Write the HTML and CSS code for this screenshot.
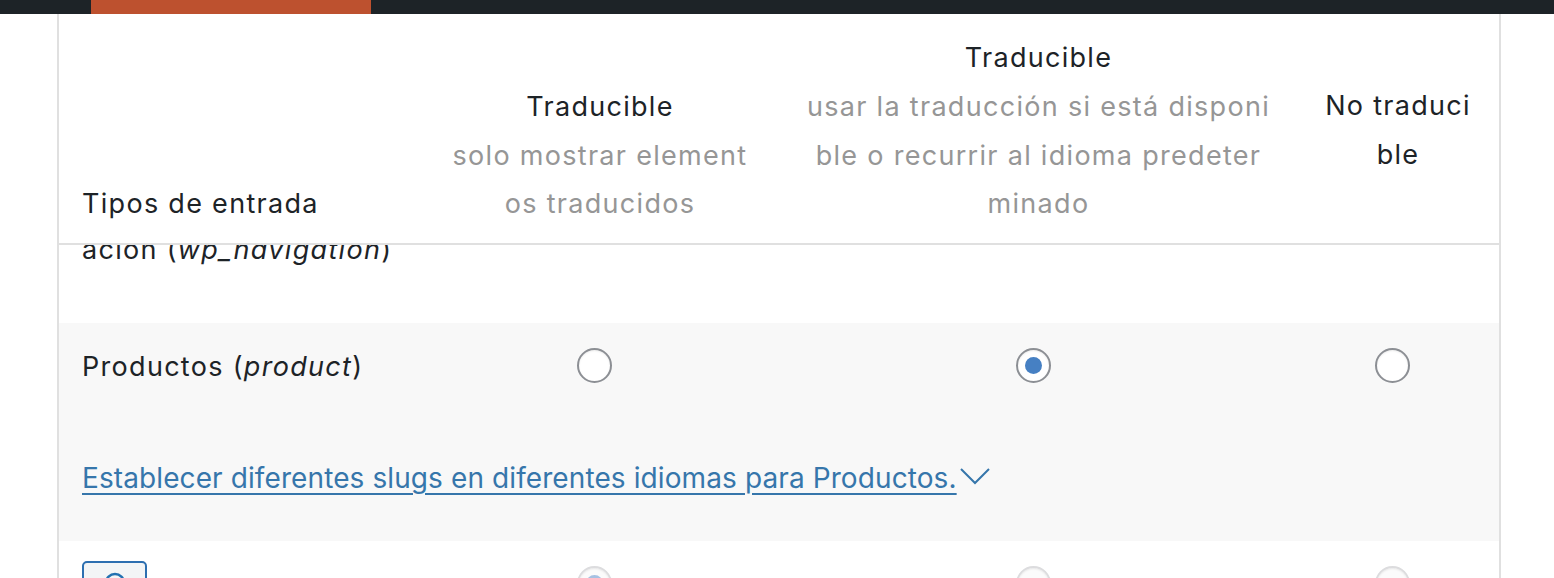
FILE: index.html
```html
<!DOCTYPE html>
<html lang="es">
<head>
<meta charset="utf-8">
<title>Tipos de entrada</title>
<link rel="stylesheet" href="styles.css">
</head>
<body>
<div class="topbar"><div class="tab"></div></div>
<div class="card">
  <div class="grid head">
    <div class="th first">Tipos de entrada</div>
    <div class="th"><span class="line">Traducible</span><span class="line sub">solo mostrar element</span><span class="line sub">os traducidos</span></div>
    <div class="th"><span class="line">Traducible</span><span class="line sub">usar la traducción si está disponi</span><span class="line sub">ble o recurrir al idioma predeter</span><span class="line sub">minado</span></div>
    <div class="th mid"><span class="line">No traduci</span><span class="line">ble</span></div>
  </div>
  <div class="rows">
    <div class="row row1">
      <div class="name">ación (<em>wp_navigation</em>)</div>
    </div>
    <div class="row row2 grid">
      <div class="name">Productos (<em>product</em>)</div>
      <div class="cell"><span class="radio"></span></div>
      <div class="cell"><span class="radio checked"></span></div>
      <div class="cell"><span class="radio"></span></div>
      <div class="slug"><a href="#" class="slug-link">Establecer diferentes slugs en diferentes idiomas para Productos.</a><svg class="chev" width="32" height="18" viewBox="0 0 32 18"><polyline points="2,2 16,16 30,2" fill="none" stroke="#3676ab" stroke-width="2"/></svg></div>
    </div>
    <div class="row row3 grid">
      <div class="name"><span class="lockbox"><svg width="40" height="40" viewBox="0 0 40 40"><circle cx="20" cy="20" r="9" fill="none" stroke="#2271b1" stroke-width="2.5"/></svg></span></div>
      <div class="cell"><span class="radio dis checked"></span></div>
      <div class="cell"><span class="radio dis"></span></div>
      <div class="cell"><span class="radio dis"></span></div>
    </div>
  </div>
</div>
</body>
</html>
```
FILE: styles.css
```css
html, body {
  margin: 0;
  padding: 0;
  background: #ffffff;
}
body {
  font-family: Inter, "Noto Sans", "Liberation Sans", sans-serif;
  font-size: 27px;
  letter-spacing: 1.3px;
  line-height: 48.67px;
  color: #1d2327;
  overflow: hidden;
  height: 578px;
}
.topbar {
  height: 14px;
  background: #1d2327;
  padding-left: 91px;
}
.tab {
  width: 280px;
  height: 14px;
  background: #bd512f;
}
.card {
  margin-left: 57px;
  width: 1440px;
  height: 564px;
  border-left: 2px solid #e0e0e0;
  border-right: 2px solid #e0e0e0;
  overflow: hidden;
}
.grid {
  display: grid;
  grid-template-columns: 361px 360px 517px 202px;
}
.head {
  height: 229px;
  border-bottom: 2px solid #e0e0e0;
  align-items: end;
}
.th {
  padding-bottom: 14px;
  text-align: center;
  font-weight: 400;
}
.th.mid {
  align-self: center;
  padding-bottom: 0;
  padding-top: 5px;
}
.th.first {
  text-align: left;
  padding-left: 23px;
}
.line {
  display: block;
  white-space: nowrap;
}
.sub {
  color: #969696;
}
.rows {
  overflow: hidden;
  height: 333px;
}
.row {
  box-sizing: border-box;
}
.name {
  padding-left: 23px;
  white-space: nowrap;
}
.row1 {
  margin-top: -19px;
  height: 97px;
  background: #ffffff;
}
.row2 {
  background: #f8f8f8;
  height: 218px;
  padding-top: 20px;
  align-items: start;
}
.row3 {
  background: #ffffff;
  padding-top: 20px;
  align-items: start;
}
.cell {
  display: flex;
  justify-content: center;
  padding-right: 11px;
}
.row2 .cell {
  padding-top: 5px;
}
.row3 .cell {
  padding-top: 5px;
}
.radio {
  display: block;
  width: 35px;
  height: 35px;
  box-sizing: border-box;
  border: 2px solid #8c8f94;
  border-radius: 50%;
  background: #ffffff;
  box-shadow: inset 0 1px 2px rgba(0, 0, 0, 0.08);
  position: relative;
}
.radio.checked::before {
  content: "";
  position: absolute;
  left: 7px;
  top: 7px;
  width: 17px;
  height: 17px;
  border-radius: 50%;
  background: #4680c3;
}
.radio.dis {
  border-color: #dcdcde;
  background: #fbfbfb;
}
.radio.dis.checked::before {
  background: #a6c1e2;
}
.slug {
  grid-column: 1 / -1;
  padding-left: 23px;
  margin-top: 23px;
  display: flex;
  align-items: center;
}
.slug-link {
  color: #3676ab;
  font-size: 28px;
  letter-spacing: 0.1px;
  text-decoration: underline;
  text-decoration-thickness: 2px;
  text-underline-offset: 5px;
  white-space: nowrap;
}
.chev {
  margin-left: 2px;
  margin-top: -4px;
}
.lockbox {
  display: flex;
  justify-content: center;
  align-items: flex-start;
  width: 65px;
  height: 50px;
  box-sizing: border-box;
  border: 2px solid #2d6fb0;
  border-radius: 5px;
  background: #f3f5f6;
  padding-top: 0;
}
```
